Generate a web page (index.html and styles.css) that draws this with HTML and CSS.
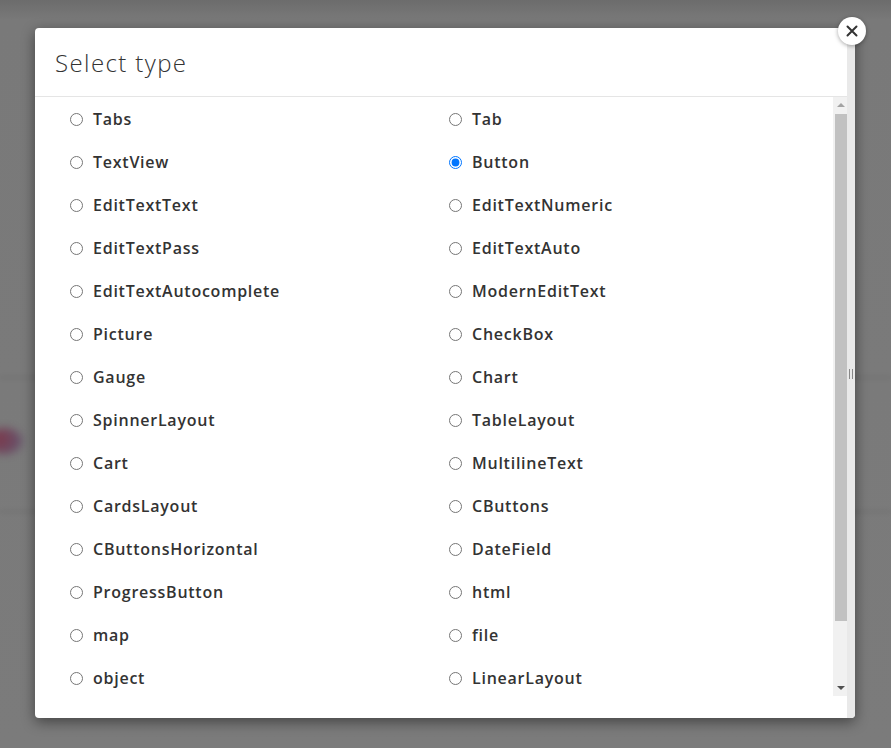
FILE: index.html
```html
<!DOCTYPE html>
<html>
<head>
<meta charset="utf-8">
<link rel="stylesheet" href="styles.css">
</head>
<body>
<div class="page">
  <div class="bg-line bg-line-1"></div>
  <div class="bg-line bg-line-2"></div>
  <div class="bg-blob"></div>
</div>
<div class="modal">
  <div class="main">
    <div class="header"><h2 class="title">Select type</h2></div>
    <div class="body">
      <div class="list">
        <label class="item"><input type="radio" name="t"><span>Tabs</span></label>
        <label class="item"><input type="radio" name="t"><span>Tab</span></label>
        <label class="item"><input type="radio" name="t"><span>TextView</span></label>
        <label class="item"><input type="radio" name="t" checked><span>Button</span></label>
        <label class="item"><input type="radio" name="t"><span>EditTextText</span></label>
        <label class="item"><input type="radio" name="t"><span>EditTextNumeric</span></label>
        <label class="item"><input type="radio" name="t"><span>EditTextPass</span></label>
        <label class="item"><input type="radio" name="t"><span>EditTextAuto</span></label>
        <label class="item"><input type="radio" name="t"><span>EditTextAutocomplete</span></label>
        <label class="item"><input type="radio" name="t"><span>ModernEditText</span></label>
        <label class="item"><input type="radio" name="t"><span>Picture</span></label>
        <label class="item"><input type="radio" name="t"><span>CheckBox</span></label>
        <label class="item"><input type="radio" name="t"><span>Gauge</span></label>
        <label class="item"><input type="radio" name="t"><span>Chart</span></label>
        <label class="item"><input type="radio" name="t"><span>SpinnerLayout</span></label>
        <label class="item"><input type="radio" name="t"><span>TableLayout</span></label>
        <label class="item"><input type="radio" name="t"><span>Cart</span></label>
        <label class="item"><input type="radio" name="t"><span>MultilineText</span></label>
        <label class="item"><input type="radio" name="t"><span>CardsLayout</span></label>
        <label class="item"><input type="radio" name="t"><span>CButtons</span></label>
        <label class="item"><input type="radio" name="t"><span>CButtonsHorizontal</span></label>
        <label class="item"><input type="radio" name="t"><span>DateField</span></label>
        <label class="item"><input type="radio" name="t"><span>ProgressButton</span></label>
        <label class="item"><input type="radio" name="t"><span>html</span></label>
        <label class="item"><input type="radio" name="t"><span>map</span></label>
        <label class="item"><input type="radio" name="t"><span>file</span></label>
        <label class="item"><input type="radio" name="t"><span>object</span></label>
        <label class="item"><input type="radio" name="t"><span>LinearLayout</span></label>
      </div>
      <div class="vscroll">
        <div class="arrow arrow-up"></div>
        <div class="thumb"></div>
        <div class="arrow arrow-down"></div>
      </div>
    </div>
    <div class="footer"></div>
  </div>
  <div class="strip"><div class="grip"></div></div>
  <button class="close" aria-label="Close">
    <svg width="12" height="12" viewBox="0 0 12 12"><path d="M1.5 1.5 L10.5 10.5 M10.5 1.5 L1.5 10.5" stroke="#333" stroke-width="2" stroke-linecap="round"/></svg>
  </button>
</div>
</body>
</html>
```
FILE: styles.css
```css
html, body {
  margin: 0;
  padding: 0;
}
body {
  width: 891px;
  height: 748px;
  overflow: hidden;
  background: linear-gradient(#6c6c6c 0px, #797979 20px, #7b7b7b 100%);
  font-family: "Open Sans", "DejaVu Sans", sans-serif;
  position: relative;
}
.page {
  position: absolute;
  inset: 0;
}
.bg-line {
  position: absolute;
  left: 0;
  right: 0;
  height: 3px;
  background: rgba(0, 0, 0, 0.05);
  filter: blur(2px);
}
.bg-line-1 { top: 376px; }
.bg-line-2 { top: 510px; }
.bg-blob {
  position: absolute;
  left: -14px;
  top: 428px;
  width: 36px;
  height: 26px;
  border-radius: 50%;
  background: radial-gradient(circle at 35% 40%, #7e2a40, #5a4f72);
  opacity: 0.8;
  filter: blur(4px);
}
.modal {
  position: absolute;
  left: 35px;
  top: 28px;
  width: 820px;
  height: 690px;
  background: #fff;
  border-radius: 4px;
  box-shadow: 0 4px 14px rgba(0, 0, 0, 0.45);
  display: flex;
}
.main {
  flex: 1;
  display: flex;
  flex-direction: column;
  min-width: 0;
}
.header {
  height: 69px;
  box-sizing: border-box;
  border-bottom: 1px solid #e5e5e5;
  padding-left: 20px;
  display: flex;
  align-items: center;
}
.title {
  margin: 0;
  font-weight: 300;
  font-size: 24px;
  letter-spacing: 1.4px;
  color: #333;
  padding-top: 0;
}
.body {
  height: 599px;
  display: flex;
}
.list {
  flex: 1;
  overflow: hidden;
  display: grid;
  grid-template-columns: 379px 1fr;
  grid-auto-rows: 43px;
  padding-left: 35px;
}
.item {
  display: flex;
  align-items: center;
  font-size: 16px;
  font-weight: 600;
  letter-spacing: 0.75px;
  color: #333;
}
.item input {
  margin: 2px 10px 0 0;
  width: 13px;
  height: 13px;
}
.vscroll {
  width: 14px;
  background: #f1f1f1;
  display: flex;
  flex-direction: column;
  align-items: flex-end;
}
.thumb {
  width: 12px;
  height: 507px;
  background: #c1c1c1;
}
.arrow {
  width: 12px;
  height: 17px;
  position: relative;
}
.arrow::after {
  content: "";
  position: absolute;
  left: 2px;
  border-left: 4px solid transparent;
  border-right: 4px solid transparent;
}
.arrow-up::after {
  top: 6px;
  border-bottom: 4px solid #a3a3a3;
}
.arrow-down {
  margin-top: auto;
  height: 14px;
}
.arrow-down::after {
  top: 4px;
  border-top: 4px solid #505050;
}
.footer {
  height: 21px;
}
.strip {
  width: 8px;
  background: #e9e9e9;
  border-radius: 0 4px 4px 0;
  display: flex;
  align-items: center;
  justify-content: center;
}
.grip {
  width: 2px;
  height: 10px;
  border-left: 1px solid #888;
  border-right: 1px solid #888;
  margin-top: 2px;
}
.close {
  position: absolute;
  right: -11px;
  top: -11px;
  width: 28px;
  height: 28px;
  border-radius: 50%;
  border: none;
  background: #fff;
  box-shadow: 0 1px 4px rgba(0, 0, 0, 0.35);
  padding: 0;
  display: flex;
  align-items: center;
  justify-content: center;
}
```
